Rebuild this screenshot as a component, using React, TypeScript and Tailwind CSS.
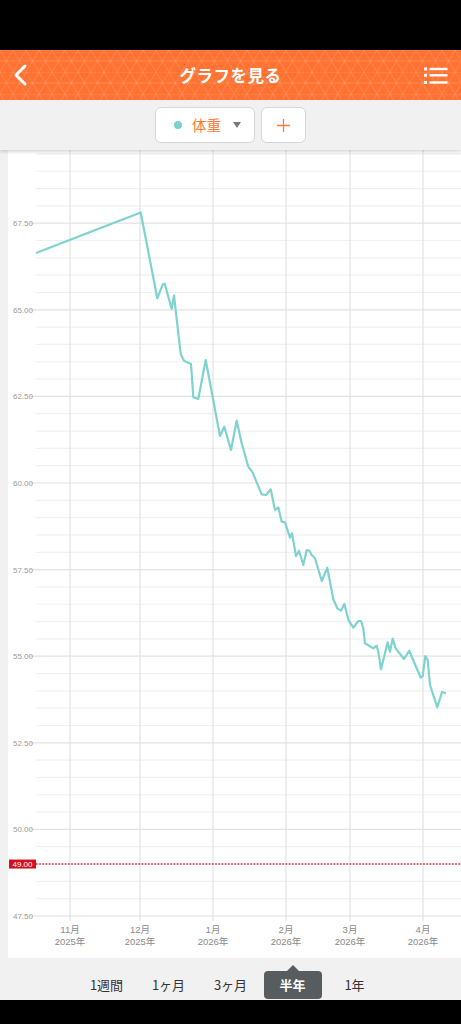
import React from "react"

const FONT = { fontFamily: '"Noto Sans CJK JP", "Noto Sans", sans-serif' }
const AXIS_FONT = '"Liberation Sans", "Noto Sans CJK JP", sans-serif'

// chart geometry (page pixels)
const PLOT_LEFT = 36
const BASE_Y = 916 // 47.50
const PX_PER_KG = 34.64
const yOf = (v: number) => BASE_Y - (v - 47.5) * PX_PER_KG

const yLabels = [47.5, 50, 52.5, 55, 57.5, 60, 62.5, 65, 67.5]

const months = [
  { x: 70, m: "11月", y: "2025年" },
  { x: 140, m: "12月", y: "2025年" },
  { x: 213, m: "1月", y: "2026年" },
  { x: 286, m: "2月", y: "2026年" },
  { x: 350, m: "3月", y: "2026年" },
  { x: 423, m: "4月", y: "2026年" },
]

const points: [number, number][] = [
  [36, 253], [140.7, 212.5], [157.3, 298.3], [162.7, 284.3], [164.7, 283.7], [171.7, 309],
  [174, 295.3], [180.7, 354], [184, 360.7], [191, 364], [193.3, 397.3], [198.3, 399],
  [205.7, 360], [220, 436], [224.3, 426.7], [231, 450], [236.7, 420.7], [241.7, 443.3],
  [248.3, 466.7], [252.7, 472.7], [261.7, 494.3], [266, 495], [270.7, 489.3], [275, 510],
  [278.3, 507.3], [281.7, 521.7], [285, 522.3], [290, 537.7], [292, 533.3], [296, 556],
  [299, 550.7], [303.3, 565], [306.7, 550], [309.3, 550.7], [311.7, 555], [315, 558.3],
  [321.7, 581], [327.3, 567.7], [333.3, 599.3], [337.3, 608.3], [341, 610.7], [344.3, 604],
  [348.7, 620.7], [353.3, 627.7], [358.3, 621], [361, 621], [363.3, 628.3], [365, 643.3],
  [373.3, 648.3], [376.7, 645.7], [378.3, 651.7], [381, 669.3], [387.7, 642.3], [390, 651.7],
  [392.7, 638.7], [395.7, 648.3], [404, 659], [409.3, 650.7], [420.7, 677.7], [422.7, 676],
  [425.3, 656], [427.7, 660], [430, 685], [437.3, 707.3], [442, 692], [446, 693.3],
]

const tabs = ["1週間", "1ヶ月", "3ヶ月", "半年", "1年"]

const Header = () => (
  <header className="relative h-[50px] bg-[#ff7232] flex items-center overflow-hidden">
    <svg className="absolute inset-0" width="461" height="50">
      <defs>
        <pattern id="tri" width="13" height="22" patternUnits="userSpaceOnUse">
          <path
            d="M0 0H13M0 11H13M0 0L13 22M13 0L0 22"
            stroke="rgba(255,255,255,0.14)"
            strokeWidth="1"
            fill="none"
          />
        </pattern>
      </defs>
      <rect width="461" height="50" fill="url(#tri)" />
    </svg>
    <div className="relative w-[44px] h-full flex items-center pl-[13px]">
      <svg width="16" height="24" viewBox="0 0 16 24">
        <path d="M12 3L3 12L12 21" stroke="#fff" strokeWidth="3" fill="none" strokeLinecap="round" strokeLinejoin="round" />
      </svg>
    </div>
    <h1 className="relative flex-1 text-center text-white font-bold text-[16.5px] tracking-[0.5px]">グラフを見る</h1>
    <div className="relative w-[44px] h-full flex items-center justify-end pr-[13px]">
      <svg width="24" height="20" viewBox="0 0 24 20">
        <g fill="#fff">
          <rect x="0" y="2.5" width="3" height="3" />
          <rect x="0" y="8.8" width="3" height="3" />
          <rect x="0" y="16" width="3" height="3" />
          <rect x="5.5" y="2.8" width="18" height="2.4" />
          <rect x="5.5" y="9.1" width="18" height="2.4" />
          <rect x="5.5" y="16.3" width="18" height="2.4" />
        </g>
      </svg>
    </div>
  </header>
)

const Toolbar = () => (
  <div className="relative z-10 h-[50px] bg-[#f1f1f1] flex items-center justify-center gap-[6px] shadow-[0_2px_3px_rgba(0,0,0,0.15)]">
    <button className="w-[100px] h-[36px] bg-white border border-[#d6d6d6] rounded-[6px] flex items-center pl-[18px]">
      <span className="w-[8px] h-[8px] rounded-full bg-[#7dd1cb]" />
      <span className="ml-[10px] text-[14.5px] text-[#ff7a3a] leading-none">体重</span>
      <span className="ml-[12px] w-0 h-0 border-l-[4px] border-r-[4px] border-t-[6px] border-l-transparent border-r-transparent border-t-[#7a7a7a]" />
    </button>
    <button className="w-[45px] h-[36px] bg-white border border-[#d6d6d6] rounded-[6px] flex items-center justify-center">
      <svg width="13" height="13" viewBox="0 0 13 13">
        <path d="M6.5 0V13M0 6.5H13" stroke="#ff7a3a" strokeWidth="1.3" />
      </svg>
    </button>
  </div>
)

const Chart = () => {
  const hLines = Array.from({ length: 46 }, (_, k) => 47.5 + k * 0.5)
  return (
    <div className="h-[808px] bg-[#f1f1f1] pl-[8px]">
      <div className="h-full bg-white">
        <svg width="453" height="808" viewBox="8 150 453 808" fontFamily={AXIS_FONT}>
          {hLines.map((v) => {
            const major = (v * 2) % 5 === 0
            return (
              <line
                key={v}
                x1={PLOT_LEFT - (major ? 6 : 0)}
                x2={461}
                y1={yOf(v)}
                y2={yOf(v)}
                stroke={major ? "#e2e2e2" : "#f0f0f0"}
                strokeWidth="1.2"
              />
            )
          })}
          {months.map((m) => (
            <line key={m.m} x1={m.x} x2={m.x} y1={150} y2={921} stroke="#e2e2e2" strokeWidth="1.2" />
          ))}
          {yLabels.map((v) => (
            <text key={v} x={33} y={yOf(v) + 3} textAnchor="end" fontSize="8" fill="#9a9a9a">
              {v.toFixed(2)}
            </text>
          ))}
          {months.map((m) => (
            <g key={m.m + "l"} fontSize="9.5" fill="#8a8a8a" textAnchor="middle">
              <text x={m.x} y={933}>{m.m}</text>
              <text x={m.x} y={945}>{m.y}</text>
            </g>
          ))}
          {/* goal line */}
          <line x1={PLOT_LEFT} x2={461} y1={yOf(49)} y2={yOf(49)} stroke="#e0202a" strokeWidth="1.6" strokeDasharray="1.6 1.6" />
          <rect x={9} y={yOf(49) - 4.5} width={27} height={9} fill="#d3101c" />
          <text x={22.5} y={yOf(49) + 3} textAnchor="middle" fontSize="8" fill="#fff">49.00</text>
          <polyline
            points={points.map((p) => p.join(",")).join(" ")}
            fill="none"
            stroke="#7fd3ce"
            strokeWidth="2.2"
            strokeLinejoin="round"
          />
        </svg>
      </div>
    </div>
  )
}

const PeriodTabs = () => (
  <div className="h-[42px] bg-[#f1f1f1] flex items-center justify-center">
    {tabs.map((t) => {
      const active = t === "半年"
      return (
        <div key={t} className="w-[62px] flex justify-center">
          {active ? (
            <div className="relative mt-[11px] w-[58px] h-[28px] rounded-[4px] bg-[#575c5f] flex items-center justify-center text-white font-bold text-[13px]">
              <span className="absolute -top-[6px] left-1/2 -translate-x-1/2 w-0 h-0 border-l-[6px] border-r-[6px] border-b-[6px] border-l-transparent border-r-transparent border-b-[#575c5f]" />
              {t}
            </div>
          ) : (
            <span className="mt-[11px] text-[13px] text-[#333]">{t}</span>
          )}
        </div>
      )
    })}
  </div>
)

export default function App() {
  return (
    <div className="w-[461px] h-[1024px] overflow-hidden bg-black flex flex-col" style={FONT}>
      <div className="h-[50px] bg-black" />
      <Header />
      <Toolbar />
      <Chart />
      <PeriodTabs />
      <div className="flex-1 bg-black" />
    </div>
  )
}
